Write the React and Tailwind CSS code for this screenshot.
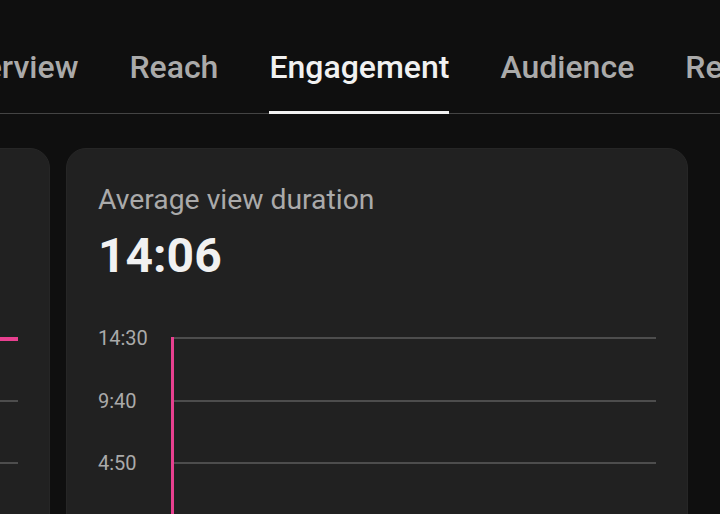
import React from "react";

const tabs = ["Overview", "Reach", "Engagement", "Audience", "Revenue"];
const ticks = ["14:30", "9:40", "4:50"];

function Chart({ showLabels, pink }) {
  return (
    <div className="relative mt-[42px] flex flex-col gap-[38.5px]">
      {ticks.map((t) => (
        <div key={t} className="flex h-6 items-center">
          {showLabels && (
            <span className="w-[74px] shrink-0 text-[20px] leading-6 text-[#aaaaaa]">{t}</span>
          )}
          <div className="h-[2px] flex-1 bg-[#4d4d4d]" />
        </div>
      ))}
      {pink === "vertical" && (
        <div className="absolute left-[73px] top-[11px] h-[400px] w-[3px] bg-[#e8408f]" />
      )}
      {pink === "flat" && (
        <div className="absolute left-0 right-0 top-[11px] h-[4px] bg-[#e8408f]" />
      )}
    </div>
  );
}

function Card({ title, value, pink, showLabels }) {
  return (
    <div className="h-[420px] w-[622px] shrink-0 overflow-hidden rounded-[20px] border border-[#262626] bg-[#212121] px-[31px] pt-[35px]">
      <div className="text-[28.3px] leading-8 text-[#aaaaaa]">{title}</div>
      <div className="mt-[12px] text-[48px] font-bold leading-[56px] text-[#f1f1f1]">{value}</div>
      <Chart pink={pink} showLabels={showLabels} />
    </div>
  );
}

export default function App() {
  return (
    <div
      className="h-[514px] w-[720px] overflow-hidden bg-[#0f0f0f]"
      style={{ fontFamily: "Roboto, 'Noto Sans', sans-serif" }}
    >
      <div className="flex border-b border-[#444444] pt-[47px]">
        <div className="ml-[-53px] flex shrink-0 gap-[51px]">
          {tabs.map((t) => (
            <div
              key={t}
              className={`-mb-px whitespace-nowrap border-b-[3px] pb-[24px] text-[32px] font-medium leading-10 ${
                t === "Engagement" ? "border-[#f1f1f1] text-[#f1f1f1]" : "border-transparent text-[#aaaaaa]"
              }`}
            >
              {t}
            </div>
          ))}
        </div>
      </div>

      <div className="ml-[-572px] mt-[34px] flex gap-4">
        <Card title="Views" value="1" pink="flat" showLabels />
        <Card title="Average view duration" value="14:06" pink="vertical" showLabels />
      </div>
    </div>
  );
}
